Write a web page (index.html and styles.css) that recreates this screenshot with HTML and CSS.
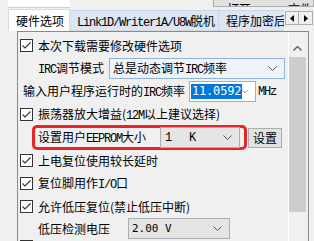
FILE: index.html
```html
<!DOCTYPE html>
<html lang="zh">
<head>
<meta charset="utf-8">
<link rel="stylesheet" href="styles.css">
</head>
<body>
<div class="top">
  <div class="topfield"></div>
  <div class="topbtn"><span class="frag1">打开</span><span class="frag2">文件</span></div>
</div>
<div class="tabs">
  <div class="tab sel">硬件选项</div>
  <div class="tab t2"><span class="m">Link1D/Writer1A/U8W</span>脱机</div>
  <div class="tab t3">程序加密后</div>
  <div class="arrows">
    <span class="arr"><svg width="4" height="7" viewBox="0 0 4 7"><path d="M4 0 L0 3.5 L4 7 Z" fill="#000"/></svg></span>
    <span class="arr"><svg width="4" height="7" viewBox="0 0 4 7"><path d="M0 0 L4 3.5 L0 7 Z" fill="#000"/></svg></span>
  </div>
</div>
<div class="page">
  <div class="frame">
    <div class="content">
      <div class="row r-cb">
        <span class="cb"><svg width="11" height="11" viewBox="0 0 11 11"><path d="M1.5 5.5 L4 8 L9.5 2.5" fill="none" stroke="#333" stroke-width="1.1"/></svg></span>
        <span>本次下载需要修改硬件选项</span>
      </div>
      <div class="row r-irc">
        <span class="lbl1"><span class="m">IRC</span>调节模式</span>
        <div class="combo blue w-irc">
          <span>总是动态调节<span class="m">IRC</span>频率</span>
          <svg class="chev" width="9" height="5" viewBox="0 0 9 5"><path d="M0.5 0.5 L4.5 4.5 L8.5 0.5" fill="none" stroke="#555" stroke-width="1"/></svg>
        </div>
      </div>
      <div class="row r-freq">
        <span><span>输入用户程序运行时的</span><span class="m">IRC</span>频率</span>
        <div class="combo edit w-freq">
          <span class="hl">11.0592</span>
          <svg class="chev" width="9" height="5" viewBox="0 0 9 5"><path d="M0.5 0.5 L4.5 4.5 L8.5 0.5" fill="none" stroke="#555" stroke-width="1"/></svg>
        </div>
        <span class="m mhz">MHz</span>
      </div>
      <div class="row r-cb">
        <span class="cb"><svg width="11" height="11" viewBox="0 0 11 11"><path d="M1.5 5.5 L4 8 L9.5 2.5" fill="none" stroke="#333" stroke-width="1.1"/></svg></span>
        <span>振荡器放大增益(<span class="m">12M</span>以上建议选择)</span>
      </div>
      <div class="row r-ee">
        <div class="redbox">
          <span>设置用户<span class="m">EEPROM</span>大小</span>
          <div class="combo gray w-ee">
            <span class="m pre">1   K</span>
            <svg class="chev" width="9" height="5" viewBox="0 0 9 5"><path d="M0.5 0.5 L4.5 4.5 L8.5 0.5" fill="none" stroke="#555" stroke-width="1"/></svg>
          </div>
        </div>
        <div class="btn">设置</div>
      </div>
      <div class="row r-cb">
        <span class="cb"><svg width="11" height="11" viewBox="0 0 11 11"><path d="M1.5 5.5 L4 8 L9.5 2.5" fill="none" stroke="#333" stroke-width="1.1"/></svg></span>
        <span>上电复位使用较长延时</span>
      </div>
      <div class="row r-cb">
        <span class="cb"><svg width="11" height="11" viewBox="0 0 11 11"><path d="M1.5 5.5 L4 8 L9.5 2.5" fill="none" stroke="#333" stroke-width="1.1"/></svg></span>
        <span>复位脚用作<span class="m">I/O</span>口</span>
      </div>
      <div class="row r-cb">
        <span class="cb"><svg width="11" height="11" viewBox="0 0 11 11"><path d="M1.5 5.5 L4 8 L9.5 2.5" fill="none" stroke="#333" stroke-width="1.1"/></svg></span>
        <span>允许低压复位(禁止低压中断)</span>
      </div>
      <div class="row r-lv">
        <span class="lbl2">低压检测电压</span>
        <div class="combo gray w-lv">
          <span class="num pre">2.00 V</span>
          <svg class="chev" width="9" height="5" viewBox="0 0 9 5"><path d="M0.5 0.5 L4.5 4.5 L8.5 0.5" fill="none" stroke="#555" stroke-width="1"/></svg>
        </div>
      </div>
      <div class="row r-cb r-last">
        <span class="cb"></span>
        <span>低压时禁止<span class="m">EEPROM</span>操作</span>
      </div>
    </div>
    <div class="sbw">
      <div class="sb">
        <div class="sb-up"><svg width="9" height="5" viewBox="0 0 9 5"><path d="M0.5 4.5 L4.5 0.5 L8.5 4.5" fill="none" stroke="#606060" stroke-width="1.4"/></svg></div>
        <div class="sb-thumb"></div>
      </div>
    </div>
  </div>
</div>
</body>
</html>
```
FILE: styles.css
```css
* { box-sizing: border-box; margin: 0; padding: 0; }
html, body { width: 314px; height: 241px; overflow: hidden; }
body {
  background: #f0f0f0;
  color: #000;
  font-family: "Noto Sans CJK SC", "Liberation Sans", sans-serif;
  font-size: 12px;
  line-height: 14px;
}
.m { font-family: "Liberation Mono", "Noto Sans CJK SC", monospace; font-size: 12px; letter-spacing: -1.2px; }
.pre { white-space: pre; }
.num { font-family: "DejaVu Sans Mono", monospace; font-size: 11px; }

/* top strip */
.top { height: 9px; display: flex; }
.topfield { margin-left: 8px; width: 62px; height: 8px; background: #fff; border-bottom: 1px solid #cfcfcf; }
.topbtn {
  margin-left: 143px; width: 101px; height: 7px; background: #e1e1e1;
  border: 1px solid #adadad; border-top: none; overflow: hidden;
  display: flex; align-items: flex-end; color: #000;
}
.topbtn span { display: block; height: 14px; line-height: 14px; margin-bottom: -10px; }
.frag1 { margin-left: 13px; }
.frag2 { margin-left: 37px; }

/* tabs */
.tabs { height: 22px; display: flex; align-items: flex-end; }
.tab { height: 21px; line-height: 20px; white-space: nowrap; overflow: hidden; border-bottom: 1px solid #d9d9d9; }
.tab.sel {
  margin-left: 8px; width: 62px; height: 22px; background: #fff;
  border: 1px solid #d9d9d9; border-bottom: none; padding-left: 7px; line-height: 21px;
}
.t2 { width: 148px; background: #dae6f3; border-top: 1px solid #c8d6e6; padding-left: 7px; }
.t3 { width: 66px; background: #dae6f3; border-top: 1px solid #c8d6e6; border-left: 1px solid #c8d6e6; padding-left: 7px; }
.arrows { display: flex; align-self: flex-start; margin-top: 2px; margin-left: 1px; }
.arr {
  width: 14px; height: 14px; background: #f0f0f0; border: 1px solid #adadad;
  display: flex; align-items: center; justify-content: center;
}
.arr + .arr { border-left: none; }

/* page */
.page { padding-left: 17px; height: 210px; }
.frame { width: 292px; height: 210px; border: 1px solid #8a8a8a; border-bottom: none; display: flex; }
.content { width: 270px; padding-top: 2px; overflow: hidden; }
.row { height: 23px; display: flex; align-items: center; white-space: nowrap; }
.r-cb { padding-left: 2px; }
.r-last { align-items: flex-start; padding-top: 1px; }
.cb {
  width: 13px; height: 13px; border: 1px solid #333; background: #fff;
  margin-right: 5px; display: flex; align-items: center; justify-content: center; flex: none;
}
.r-irc { padding-left: 20px; }
.lbl1 { width: 71px; }
.r-freq { padding-left: 5px; }
.r-lv { padding-left: 20px; height: 21px; }
.lbl2 { width: 90px; }

.combo {
  height: 21px; display: flex; align-items: center; justify-content: space-between;
  padding: 0 7px 0 3px; flex: none;
}
.combo.blue { background: #eef3f9; border: 1px solid #8fb3da; }
.combo.edit { background: #fff; border: 1px solid #8fb3da; padding-left: 1px; margin-left: 4px; }
.combo.gray { background: #e5e5e5; border: 1px solid #adadad; }
.w-irc { width: 176px; }
.w-freq { width: 67px; }
.w-ee { width: 80px; margin-left: 14px; padding-left: 4px; }
.w-lv { width: 102px; padding-left: 3px; }
.hl {
  background: #0078d7; color: #fff; font-family: "DejaVu Sans Mono", monospace;
  font-size: 12px; line-height: 15px; padding: 0 1px; letter-spacing: -0.2px;
}
.mhz { margin-left: 2px; }

.r-ee { padding-left: 14px; }
.redbox {
  height: 25px; width: 215px; border: 3px solid #e4262b; border-radius: 5px;
  display: flex; align-items: center; padding-left: 3px; flex: none;
}
.btn {
  margin-left: 1px; width: 34px; height: 20px; background: #e1e1e1; border: 1px solid #adadad;
  display: flex; align-items: center; justify-content: center; flex: none;
}

/* scrollbar */
.sbw { width: 20px; border-left: 1px solid #fff; }
.sb { width: 17px; margin-top: 8px; }
.sb-up { height: 17px; display: flex; align-items: center; justify-content: center; }
.sb-thumb { height: 155px; background: #cdcdcd; }
```
